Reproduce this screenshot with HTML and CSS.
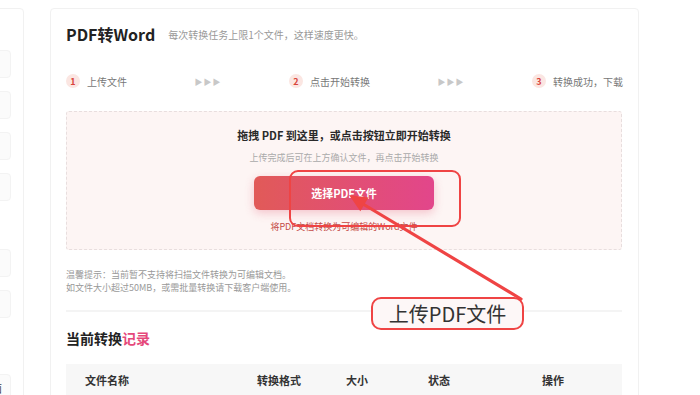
FILE: index.html
```html
<!DOCTYPE html>
<html lang="zh">
<head>
<meta charset="utf-8">
<title>PDF转Word</title>
<link rel="stylesheet" href="styles.css">
</head>
<body>
<div class="page">
  <aside class="sidebar">
    <div class="side-item"></div>
    <div class="side-item"></div>
    <div class="side-item"></div>
    <div class="side-item"></div>
    <div class="side-item group"></div>
    <div class="side-item"></div>
    <div class="side-item last"><span>页面</span></div>
  </aside>

  <main class="card">
    <div class="title-row">
      <h1 class="title">PDF转Word</h1>
      <span class="subtitle">每次转换任务上限1个文件，这样速度更快。</span>
    </div>

    <div class="steps">
      <div class="step"><span class="num">1</span><span class="step-text">上传文件</span></div>
      <span class="sep">▶▶▶</span>
      <div class="step"><span class="num">2</span><span class="step-text">点击开始转换</span></div>
      <span class="sep">▶▶▶</span>
      <div class="step"><span class="num">3</span><span class="step-text">转换成功，下载</span></div>
    </div>

    <div class="dropzone">
      <div class="drop-title">拖拽 PDF 到这里，或点击按钮立即开始转换</div>
      <div class="drop-sub">上传完成后可在上方确认文件，再点击开始转换</div>
      <button class="choose">选择PDF文件</button>
      <div class="drop-note">将PDF文档转换为可编辑的Word文件</div>
    </div>

    <div class="tips">
      <p>温馨提示：当前暂不支持将扫描文件转换为可编辑文档。</p>
      <p>如文件大小超过50MB，或需批量转换请下载客户端使用。</p>
    </div>

    <div class="divider"></div>

    <h2 class="records">当前转换<span class="accent">记录</span></h2>

    <div class="table-head">
      <span>文件名称</span>
      <span>转换格式</span>
      <span>大小</span>
      <span>状态</span>
      <span>操作</span>
    </div>
  </main>
</div>

<div class="mark-box"></div>
<svg class="mark-arrow" width="700" height="395" viewBox="0 0 700 395">
  <line x1="521" y1="299" x2="363" y2="204" stroke="#ef4444" stroke-width="3.2" stroke-linecap="round"/>
  <polygon points="349,195 360.3,211.2 368.5,197.4" fill="#ef4444"/>
</svg>
<div class="mark-label">上传PDF文件</div>
</body>
</html>
```

FILE: styles.css
```css
* { box-sizing: border-box; }

html, body {
  margin: 0;
  padding: 0;
  background: #ffffff;
  font-family: "Noto Sans CJK SC", "Noto Sans", sans-serif;
  color: #333;
  overflow: hidden;
}

.page {
  display: flex;
  align-items: flex-start;
  gap: 26px;
  padding-top: 8px;
  height: 395px;
}

.sidebar {
  width: 100px;
  margin-left: -76px;
  height: 420px;
  border: 1px solid #f1f1f1;
  border-radius: 4px;
  padding: 41px 12px 0 0;
  display: flex;
  flex-direction: column;
  align-items: flex-end;
  gap: 13px;
  flex-shrink: 0;
}

.side-item {
  width: 70px;
  height: 28px;
  background: #fbfbfb;
  border: 1px solid #f3f3f3;
  border-radius: 4px;
  flex-shrink: 0;
}

.side-item.group { margin-top: 35px; }
.side-item.last {
  margin-top: 43px;
  display: flex;
  align-items: center;
  justify-content: flex-end;
  padding-right: 8px;
  font-size: 11px;
  line-height: 14px;
  color: #444;
}

.card {
  width: 589px;
  height: 420px;
  border: 1px solid #f1f1f1;
  border-radius: 4px;
  padding: 13px 16px 0 15px;
  flex-shrink: 0;
}

.title-row {
  display: flex;
  align-items: center;
  height: 24px;
  gap: 13px;
}

.title {
  margin: 0;
  font-size: 16px;
  font-weight: 700;
  color: #222;
  line-height: 24px;
}

.subtitle {
  font-size: 10px;
  color: #999;
  padding-top: 1px;
}

.steps {
  margin-top: 28px;
  height: 14px;
  display: flex;
  align-items: center;
  justify-content: space-between;
  width: 557px;
}

.step {
  display: flex;
  align-items: center;
  gap: 7px;
}

.num {
  width: 14px;
  height: 14px;
  border-radius: 50%;
  background: #fbe6e2;
  color: #d8443a;
  font-size: 9px;
  font-weight: 700;
  display: flex;
  align-items: center;
  justify-content: center;
  line-height: 1;
}

.step-text {
  font-size: 10px;
  color: #777;
}

.sep {
  font-size: 8px;
  color: #c8c8c8;
  letter-spacing: 1px;
}

.dropzone {
  margin-top: 23px;
  width: 556px;
  height: 139px;
  background: #fdf5f4;
  border: 1px dashed #e8dede;
  border-radius: 3px;
  padding-top: 15px;
  display: flex;
  flex-direction: column;
  align-items: center;
}

.drop-title {
  font-size: 11px;
  font-weight: 700;
  color: #2a2a2a;
  line-height: 16px;
}

.drop-sub {
  margin-top: 8px;
  font-size: 9px;
  color: #aaa;
  line-height: 14px;
}

.choose {
  margin-top: 11px;
  width: 180px;
  height: 34px;
  border: none;
  border-radius: 6px;
  background: linear-gradient(90deg, #e15a58, #e2468b);
  color: #fff;
  font-family: inherit;
  font-size: 11px;
  font-weight: 700;
  box-shadow: 0 3px 10px rgba(226, 80, 110, 0.3);
}

.drop-note {
  margin-top: 10px;
  font-size: 9px;
  color: #c44a45;
  line-height: 14px;
}

.tips {
  margin-top: 18px;
}

.tips p {
  margin: 0;
  font-size: 9px;
  line-height: 13px;
  color: #999;
}

.divider {
  margin-top: 16px;
  width: 556px;
  height: 2px;
  background: #f4f4f4;
}

.records {
  margin: 16px 0 0 0;
  font-size: 14px;
  font-weight: 700;
  line-height: 20px;
  color: #222;
}

.accent { color: #e5487a; }

.table-head {
  margin-top: 16px;
  width: 556px;
  height: 32px;
  background: #f7f7f7;
  display: grid;
  grid-template-columns: 172px 89px 82px 114px 1fr;
  align-items: center;
  padding-left: 19px;
  font-size: 11px;
  font-weight: 700;
  color: #333;
}

/* annotation overlays */
.mark-box {
  position: absolute;
  left: 289px;
  top: 170px;
  width: 172px;
  height: 57px;
  border: 2px solid #ef4444;
  border-radius: 9px;
}

.mark-arrow {
  position: absolute;
  left: 0;
  top: 0;
  pointer-events: none;
}

.mark-label {
  position: absolute;
  left: 371px;
  top: 297px;
  width: 153px;
  height: 33px;
  border: 2px solid #ef4444;
  border-radius: 10px;
  background: #fdf7f7;
  font-size: 20px;
  color: #333;
  display: flex;
  align-items: center;
  justify-content: center;
  line-height: 1;
}
```
